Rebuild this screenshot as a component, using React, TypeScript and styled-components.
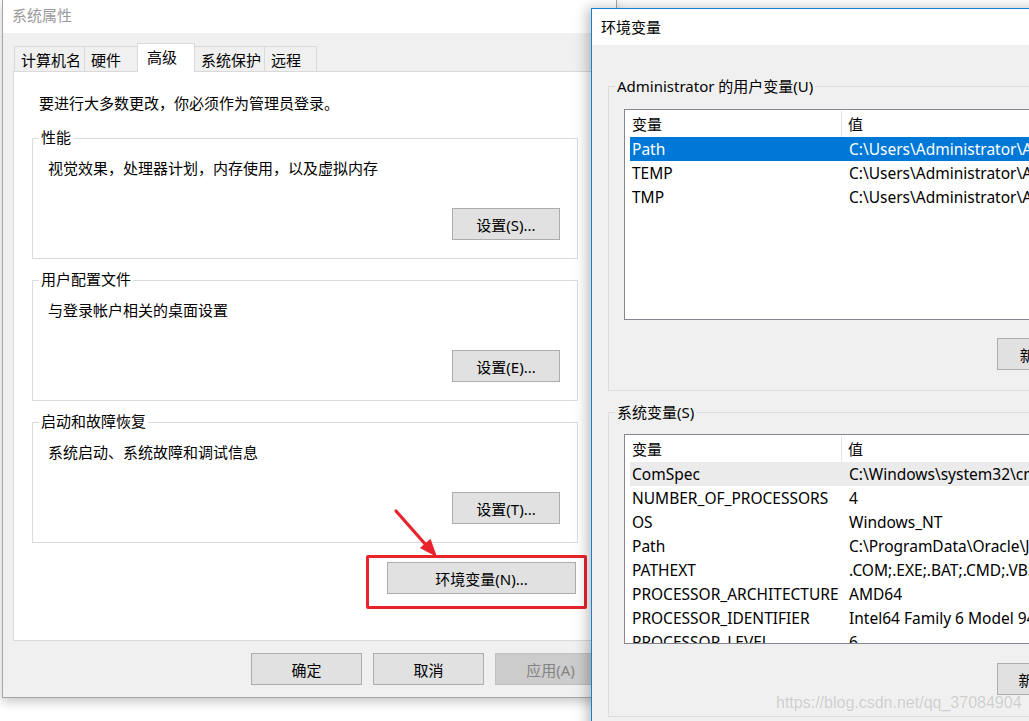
import { createGlobalStyle, styled } from "styled-components"

const GlobalStyle = createGlobalStyle`
  * { box-sizing: border-box; }
  html, body {
    margin: 0;
    padding: 0;
    overflow: hidden;
    background: #ffffff;
    font-family: "Noto Sans", "Noto Sans CJK SC", sans-serif;
    font-size: 15px;
    color: #000;
  }
`

const userVars = [
  { name: "Path", value: "C:\\Users\\Administrator\\AppData\\Local\\Microsoft\\WindowsApps;" },
  { name: "TEMP", value: "C:\\Users\\Administrator\\AppData\\Local\\Temp" },
  { name: "TMP", value: "C:\\Users\\Administrator\\AppData\\Local\\Temp" },
]

const sysVars = [
  { name: "ComSpec", value: "C:\\Windows\\system32\\cmd.exe" },
  { name: "NUMBER_OF_PROCESSORS", value: "4" },
  { name: "OS", value: "Windows_NT" },
  { name: "Path", value: "C:\\ProgramData\\Oracle\\Java\\javapath;C:\\Windows\\system32" },
  { name: "PATHEXT", value: ".COM;.EXE;.BAT;.CMD;.VBS;.VBE;.JS;.JSE;.WSF;.WSH;.MSC" },
  { name: "PROCESSOR_ARCHITECTURE", value: "AMD64" },
  { name: "PROCESSOR_IDENTIFIER", value: "Intel64 Family 6 Model 94 Stepping 3, GenuineIntel" },
  { name: "PROCESSOR_LEVEL", value: "6" },
]

// widths include the 1px border shared with the neighbour
const tabs = [
  { title: "计算机名", width: 71 },
  { title: "硬件", width: 54 },
  { title: "高级", width: 58, active: true },
  { title: "系统保护", width: 71 },
  { title: "远程", width: 53 },
]

const groups = [
  { title: "性能", text: "视觉效果，处理器计划，内存使用，以及虚拟内存", button: "设置(S)..." },
  { title: "用户配置文件", text: "与登录帐户相关的桌面设置", button: "设置(E)..." },
  { title: "启动和故障恢复", text: "系统启动、系统故障和调试信息", button: "设置(T)..." },
]

const VarList = ({ rows, height, selected, hovered }: ListProps) => (
  <StyledList $height={ height }>
    <StyledListHead>
      <StyledHeadCell $first>变量</StyledHeadCell>
      <StyledHeadCell>值</StyledHeadCell>
    </StyledListHead>
    <StyledListBody>
      {
        rows.map((r, i) => (
          <StyledRow key={ r.name + i } $selected={ i === selected } $hovered={ i === hovered }>
            <StyledNameCell>{ r.name }</StyledNameCell>
            <StyledValueCell>{ r.value }</StyledValueCell>
          </StyledRow>
        ))
      }
    </StyledListBody>
  </StyledList>
)

const App = () => {
  return (
    <>
      <GlobalStyle />
      <StyledDesktop>
        <StyledLeftWindow>
          <StyledLeftTitle>
            <StyledTitleText>系统属性</StyledTitleText>
            <StyledClose width="10" height="10" viewBox="0 0 10 10">
              <path d="M0.5 0.5 L9.5 9.5 M9.5 0.5 L0.5 9.5" stroke="#8a8a8a" strokeWidth="1" fill="none" />
            </StyledClose>
          </StyledLeftTitle>
          <StyledLeftBody>
            <StyledTabs>
              {
                tabs.map(t => (
                  <StyledTab key={ t.title } $width={ t.width } $active={ !!t.active }>{ t.title }</StyledTab>
                ))
              }
            </StyledTabs>
            <StyledPanel>
              <StyledIntro>要进行大多数更改，你必须作为管理员登录。</StyledIntro>
              {
                groups.map(g => (
                  <StyledGroup key={ g.title }>
                    <StyledLegend $bg="#ffffff" $top={ -12 }>{ g.title }</StyledLegend>
                    <StyledDesc>{ g.text }</StyledDesc>
                    <StyledButton $width={ 108 } $align="end">{ g.button }</StyledButton>
                  </StyledGroup>
                ))
              }
              <StyledEnvRow>
                <StyledButton $width={ 189 }>环境变量(N)...</StyledButton>
              </StyledEnvRow>
            </StyledPanel>
            <StyledFooter>
              <StyledButton $width={ 111 }>确定</StyledButton>
              <StyledButton $width={ 111 }>取消</StyledButton>
              <StyledButton $width={ 111 } $disabled>应用(A)</StyledButton>
            </StyledFooter>
          </StyledLeftBody>
        </StyledLeftWindow>

        <StyledRedBox />
        <StyledArrow width="50" height="56" viewBox="0 0 50 56">
          <line x1="6" y1="6" x2="36" y2="40" stroke="#e8232b" strokeWidth="3.2" strokeLinecap="round" />
          <polygon points="47,52 29.9,43 40.5,33.8" fill="#e8232b" />
        </StyledArrow>

        <StyledRightWindow>
          <StyledRightTitle>环境变量</StyledRightTitle>
          <StyledRightBody>
            <StyledRGroup $pt={ 22 } $pb={ 20 }>
              <StyledLegend $bg="#f0f0f0" $top={ -11 }>Administrator 的用户变量(U)</StyledLegend>
              <VarList rows={ userVars } height={ 211 } selected={ 0 } />
              <StyledRButtons $mt={ 18 }>
                <StyledButton $width={ 108 }>新建(N)...</StyledButton>
                <StyledButton $width={ 108 }>编辑(E)...</StyledButton>
                <StyledButton $width={ 108 }>删除(D)</StyledButton>
              </StyledRButtons>
            </StyledRGroup>
            <StyledRGroup $pt={ 21 } $pb={ 21 } $mt={ 21 }>
              <StyledLegend $bg="#f0f0f0" $top={ -11 }>系统变量(S)</StyledLegend>
              <VarList rows={ sysVars } height={ 210 } hovered={ 0 } />
              <StyledRButtons $mt={ 19 }>
                <StyledButton $width={ 108 }>新建(W)...</StyledButton>
                <StyledButton $width={ 108 }>编辑(I)...</StyledButton>
                <StyledButton $width={ 108 }>删除(L)</StyledButton>
              </StyledRButtons>
            </StyledRGroup>
          </StyledRightBody>
        </StyledRightWindow>

        <StyledWatermark>https://blog.csdn.net/qq_37084904</StyledWatermark>
      </StyledDesktop>
    </>
  )
}

const StyledDesktop = styled("div")`
  position: relative;
  width: 1029px;
  height: 721px;
  overflow: hidden;
  background: #ffffff;
`

const StyledLeftWindow = styled("div")`
  position: absolute;
  left: 2px;
  top: 0;
  width: 615px;
  height: 698px;
  background: #f0f0f0;
  border: 1px solid #a6a6a6;
  border-top: none;
  box-shadow: 0 4px 10px rgba(0, 0, 0, 0.22);
  display: flex;
  flex-direction: column;
`

const StyledLeftTitle = styled("div")`
  height: 33px;
  background: #ffffff;
  display: flex;
  align-items: center;
  padding: 0 0 3px 9px;
  color: #9a9a9a;
`

const StyledTitleText = styled("span")`
  flex: 1;
  line-height: 20px;
`

const StyledClose = styled("svg")`
  margin-right: 15px;
  margin-top: -2px;
`

const StyledLeftBody = styled("div")`
  display: flex;
  flex-direction: column;
  padding: 10px 10px 0;
`

const StyledTabs = styled("div")`
  display: flex;
  align-items: flex-end;
  height: 29px;
  margin-bottom: -1px;
  padding-left: 1px;
  position: relative;
  z-index: 1;
`

const StyledTab = styled("div")<{ $width: number, $active: boolean }>`
  width: ${ p => p.$width }px;
  height: ${ p => p.$active ? 29 : 26 }px;
  margin-left: -1px;
  padding-left: ${ p => p.$active ? 9 : 6 }px;
  padding-top: 3px;
  line-height: 20px;
  background: ${ p => p.$active ? "#ffffff" : "#f0f0f0" };
  border: 1px solid #d9d9d9;
  border-bottom: ${ p => p.$active ? "none" : "1px solid #d9d9d9" };
  white-space: nowrap;
  position: relative;
  z-index: ${ p => p.$active ? 2 : 1 };
  &:first-child {
    margin-left: 0;
  }
`

const StyledPanel = styled("div")`
  height: 570px;
  background: #ffffff;
  border: 1px solid #d9d9d9;
  padding: 21px 27px 0 18px;
  display: flex;
  flex-direction: column;
`

const StyledIntro = styled("div")`
  padding-left: 7px;
  line-height: 20px;
  margin-bottom: 25px;
`

const StyledGroup = styled("div")`
  position: relative;
  height: 121px;
  border: 1px solid #dcdcdc;
  padding: 19px 17px 18px 15px;
  display: flex;
  flex-direction: column;
  & + & {
    margin-top: 21px;
  }
`

const StyledLegend = styled("span")<{ $bg: string, $top: number }>`
  position: absolute;
  top: ${ p => p.$top }px;
  left: 6px;
  padding: 0 2px;
  line-height: 20px;
  background: ${ p => p.$bg };
  white-space: nowrap;
`

const StyledDesc = styled("div")`
  line-height: 20px;
`

const StyledButton = styled("div")<{ $width: number, $disabled?: boolean, $align?: string }>`
  width: ${ p => p.$width }px;
  height: 32px;
  flex: none;
  display: flex;
  align-items: center;
  justify-content: center;
  background: ${ p => p.$disabled ? "#cccccc" : "#e1e1e1" };
  border: 1px solid ${ p => p.$disabled ? "#bfbfbf" : "#adadad" };
  color: ${ p => p.$disabled ? "#838383" : "#000000" };
  white-space: nowrap;
  ${ p => p.$align === "end" ? "margin-top: auto; align-self: flex-end;" : "" }
`

const StyledEnvRow = styled("div")`
  display: flex;
  justify-content: flex-end;
  margin-top: 19px;
  margin-right: 2px;
`

const StyledFooter = styled("div")`
  display: flex;
  justify-content: flex-end;
  gap: 11px;
  margin-top: 12px;
`

const StyledRedBox = styled("div")`
  position: absolute;
  left: 366px;
  top: 555px;
  width: 221px;
  height: 54px;
  border: 3px solid #e8232b;
  border-radius: 2px;
`

const StyledArrow = styled("svg")`
  position: absolute;
  left: 390px;
  top: 505px;
`

const StyledRightWindow = styled("div")`
  position: absolute;
  left: 591px;
  top: 8px;
  width: 783px;
  height: 760px;
  background: #f0f0f0;
  border: 1px solid #1a7fd4;
  box-shadow: -4px 0 12px rgba(0, 0, 0, 0.25);
  display: flex;
  flex-direction: column;
`

const StyledRightTitle = styled("div")`
  height: 36px;
  background: #ffffff;
  padding-left: 9px;
  display: flex;
  align-items: center;
  line-height: 20px;
`

const StyledRightBody = styled("div")`
  padding: 41px 16px 0;
  display: flex;
  flex-direction: column;
`

const StyledRGroup = styled("div")<{ $pt: number, $pb: number, $mt?: number }>`
  position: relative;
  border: 1px solid #dcdcdc;
  padding: ${ p => p.$pt }px 15px ${ p => p.$pb }px;
  margin-top: ${ p => p.$mt || 0 }px;
`

const StyledRButtons = styled("div")<{ $mt: number }>`
  display: flex;
  justify-content: flex-end;
  gap: 10px;
  margin-top: ${ p => p.$mt }px;
`

const StyledList = styled("div")<{ $height: number }>`
  height: ${ p => p.$height }px;
  background: #ffffff;
  border: 1px solid #828790;
  overflow: hidden;
`

const StyledListHead = styled("div")`
  display: flex;
  height: 27px;
`

const StyledHeadCell = styled("div")<{ $first?: boolean }>`
  width: ${ p => p.$first ? "217px" : "auto" };
  flex: ${ p => p.$first ? "none" : "1" };
  padding-left: ${ p => p.$first ? 7 : 6 }px;
  border-right: ${ p => p.$first ? "1px solid #e5e5e5" : "none" };
  line-height: 27px;
  margin-top: 1px;
`

const StyledListBody = styled("div")`
  padding-left: 5px;
  font-size: 15.5px;
`

const StyledRow = styled("div")<{ $selected?: boolean, $hovered?: boolean }>`
  display: flex;
  height: 24px;
  line-height: 24px;
  white-space: nowrap;
  background: ${ p => p.$selected ? "#0078d7" : p.$hovered ? "#ebebeb" : "transparent" };
  color: ${ p => p.$selected ? "#ffffff" : "#000000" };
`

const StyledNameCell = styled("div")`
  width: 212px;
  flex: none;
  padding-left: 2px;
  overflow: hidden;
`

const StyledValueCell = styled("div")`
  padding-left: 7px;
`

const StyledWatermark = styled("div")`
  position: absolute;
  left: 776px;
  top: 692px;
  font-family: "Liberation Sans", Arial, sans-serif;
  font-size: 16px;
  line-height: 22px;
  color: rgba(150, 150, 150, 0.45);
  text-shadow: 0 0 1px rgba(255, 255, 255, 0.8);
  white-space: nowrap;
`

interface ListProps {
  rows: { name: string, value: string }[]
  height: number
  selected?: number
  hovered?: number
}

export default App
